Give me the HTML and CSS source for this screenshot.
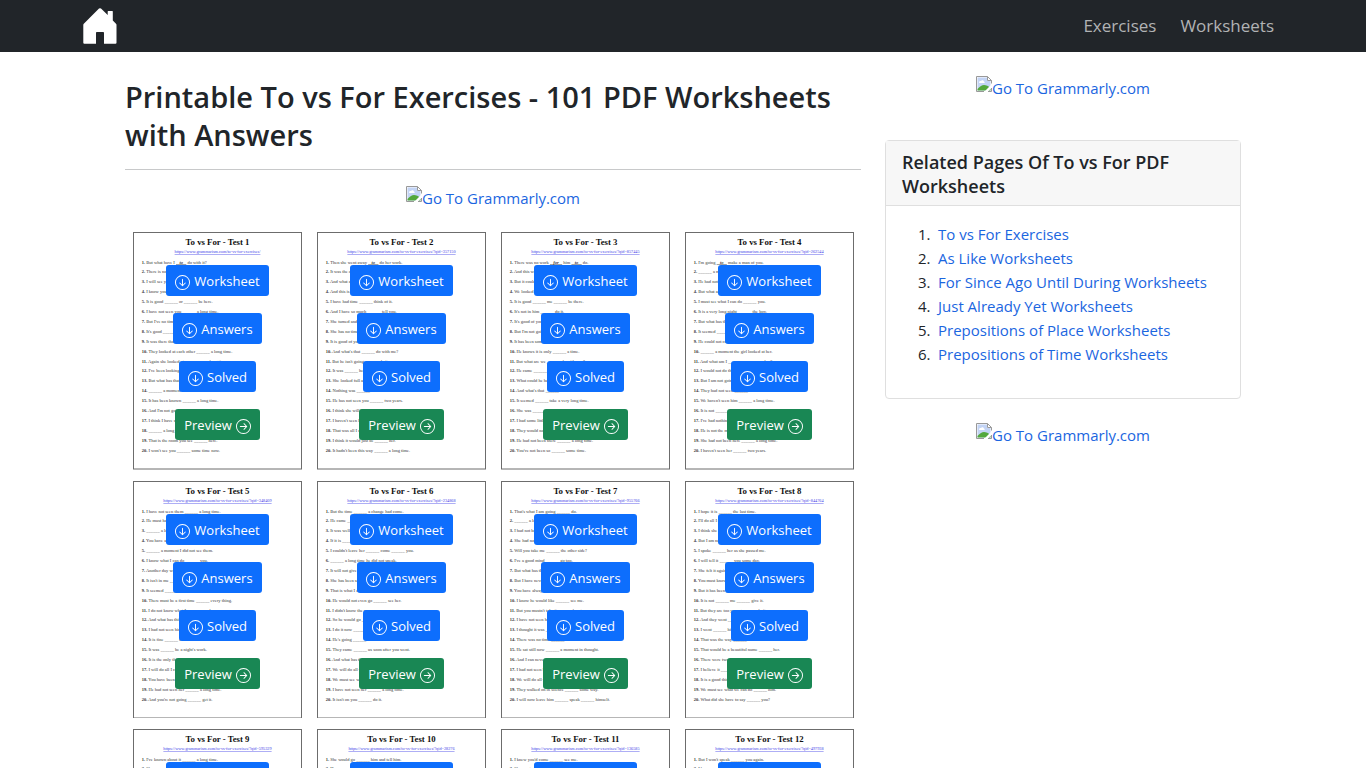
FILE: index.html
```html
<!DOCTYPE html>
<html lang="en">
<head>
<meta charset="utf-8">
<meta name="viewport" content="width=device-width, initial-scale=1">
<title>Printable To vs For Exercises</title>
<link rel="stylesheet" href="styles.css">
</head>
<body>
<svg class="symbols" aria-hidden="true">
  <symbol id="arrow-down" viewBox="0 0 16 16"><path fill-rule="evenodd" d="M1 8a7 7 0 1 0 14 0A7 7 0 0 0 1 8zm15 0A8 8 0 1 1 0 8a8 8 0 0 1 16 0zM8.500 4.500a.5.5 0 0 0-1 0v5.793L5.354 8.146a.5.5 0 1 0-.708.708l3 3a.5.5 0 0 0 .708 0l3-3a.5.5 0 0 0-.708-.708L8.500 10.293V4.500z"/></symbol>
  <symbol id="arrow-right" viewBox="0 0 16 16"><path fill-rule="evenodd" d="M1 8a7 7 0 1 0 14 0A7 7 0 0 0 1 8zm15 0A8 8 0 1 1 0 8a8 8 0 0 1 16 0zM4.500 7.500a.5.5 0 0 0 0 1h5.793l-2.147 2.146a.5.5 0 0 0 .708.708l3-3a.5.5 0 0 0 0-.708l-3-3a.5.5 0 1 0-.708.708L10.293 7.500H4.500z"/></symbol>
  <symbol id="missing-image" viewBox="0 0 16 16">
    <path d="M.5.5h11l4 4v11H.5z" fill="#fff"/>
    <path d="M1.500 1.500h9.500v3.500h3.500v9.500h-13z" fill="#c3d4f5"/>
    <path d="M3 6.500c0-1 1-1.700 2-1.400.6-1.200 2.600-1 2.900.4 1 0 1.200 1.500.2 1.500H3.500z" fill="#fff"/>
    <path d="M1.500 14.500v-1.500C4 10.500 6 9 8 9s4.500 1 6.500 3v2.500z" fill="#53a83c"/>
    <path d="M16 8 8 16h3.500L16 11.500z" fill="#fff"/>
    <path d="M.5 15.500V.5h11l4 4v3M.5 15.500H8M11.500.5v4h4M12 15.500h3.500V12" fill="none" stroke="#999"/>
  </symbol>
</svg>

<header class="navbar">
  <nav class="navbar-inner" aria-label="Main">
    <a class="brand" href="#" aria-label="Home">
      <svg class="brand-icon" viewBox="0 0 34 36" aria-hidden="true"><path d="M16 .6Q17 0 18 .6L24.700 7V3.500Q24.700 3 25.200 3H29.300Q29.800 3 29.800 3.500V12.500L33 15.800Q33.500 16.300 33.500 17V34.700Q33.500 35.700 32.500 35.700H21V24.800Q21 24 20.200 24H13.800Q13 24 13 24.800V35.700H1.300Q.3 35.700.3 34.700V17Q.3 16.300.8 15.800Z" fill="#fff"/></svg>
    </a>
    <div class="nav-links">
      <a href="#">Exercises</a>
      <a href="#">Worksheets</a>
    </div>
  </nav>
</header>

<div class="container">
  <main class="content">
    <h1>Printable To vs For Exercises - 101 PDF Worksheets with Answers</h1>
    <a class="promo" href="#"><svg class="promo-icon" aria-hidden="true"><use href="#missing-image"/></svg><span>Go To Grammarly.com</span></a>
    <div class="sheets" id="sheets"></div>
  </main>
  <aside class="sidebar">
    <a class="promo" href="#"><svg class="promo-icon" aria-hidden="true"><use href="#missing-image"/></svg><span>Go To Grammarly.com</span></a>
    <section class="card">
      <h2 class="card-header">Related Pages Of To vs For PDF Worksheets</h2>
      <ol class="card-list">
        <li><a href="#">To vs For Exercises</a></li>
        <li><a href="#">As Like Worksheets</a></li>
        <li><a href="#">For Since Ago Until During Worksheets</a></li>
        <li><a href="#">Just Already Yet Worksheets</a></li>
        <li><a href="#">Prepositions of Place Worksheets</a></li>
        <li><a href="#">Prepositions of Time Worksheets</a></li>
      </ol>
    </section>
    <a class="promo" href="#"><svg class="promo-icon" aria-hidden="true"><use href="#missing-image"/></svg><span>Go To Grammarly.com</span></a>
  </aside>
</div>
<script src="sheets.js"></script>
</body>
</html>
```
FILE: styles.css
```css
* { box-sizing: border-box; }
html { overflow-x: hidden; scrollbar-width: none; }
body {
  margin: 0;
  background: #fff;
  color: #212529;
  font: 400 15px/24px "Open Sans", "Noto Sans", sans-serif;
}
a { color: #1b66df; text-decoration: none; }
.symbols { display: none; }

.navbar { background: #212529; }
.navbar-inner {
  display: flex;
  align-items: center;
  justify-content: space-between;
  max-width: 1200px;
  min-height: 52px;
  margin: 0 auto;
}
.brand { display: flex; }
.brand-icon { width: 34px; height: 36px; }
.nav-links { display: flex; gap: 24px; padding-right: 9px; font-size: 17px; }
.nav-links a { color: #b1b3b4; }

.container {
  display: grid;
  grid-template-columns: minmax(0, 736fr) minmax(0, 356fr);
  gap: 24px;
  max-width: 1140px;
  margin: 0 auto;
  padding: 24px 12px;
}
h1 {
  margin: 0 0 16px;
  padding: 2px 0 15px;
  border-bottom: 1px solid #c8c9ca;
  font-size: 29px;
  line-height: 38px;
  font-weight: 600;
}
.content, .sidebar { display: flex; flex-direction: column; }
.promo { display: flex; justify-content: center; line-height: 25px; }
.promo-icon { width: 16px; height: 16px; flex: none; }

.sheets {
  display: grid;
  grid-template-columns: repeat(4, minmax(0, 1fr));
  gap: 11px 15px;
  margin-top: 21px;
  padding: 0 7px 0 8px;
}
.sheet { position: relative; }
.page { display: block; width: 100%; font-family: "Liberation Serif", serif; }
.page-frame { fill: #fff; stroke: #6c6c6c; stroke-width: 4; }
.page-title { font-size: 35px; font-weight: 700; text-anchor: middle; fill: #111; }
.page-url { font-size: 17px; text-anchor: middle; text-decoration: underline; fill: #4040e8; }
.page-line { font-size: 18px; fill: #333; }
.page-number { font-weight: 700; }
.page-answer { font-weight: 700; font-style: italic; text-decoration: underline; }
.actions {
  position: absolute;
  inset: 33px 0 auto;
  display: flex;
  flex-direction: column;
  align-items: center;
  gap: 17px;
}
.btn {
  display: flex;
  align-items: center;
  gap: 4px;
  padding: 6px 9px 4px;
  border-radius: 3px;
  background: #0d6efd;
  color: #fff;
  font-size: 13px;
  line-height: 21px;
}
.btn-preview { background: #198754; }
.btn-icon { width: 15px; height: 15px; margin-top: 2px; fill: currentColor; }

.card {
  margin: 39px 0 24px;
  border: 1px solid #dfdfdf;
  border-radius: 4px;
}
.card-header {
  margin: 0;
  padding: 9px 16px 7px;
  border-bottom: 1px solid #dfdfdf;
  background: #f7f7f7;
  font-size: 18px;
  line-height: 24px;
  font-weight: 600;
}
.card-list { margin: 0; padding: 16px 16px 32px 52px; }
.card-list li::marker { content: counter(list-item) ".\2002"; }

@media (max-width: 900px) {
  .container { grid-template-columns: minmax(0, 1fr); }
  .sheets { grid-template-columns: repeat(auto-fill, minmax(160px, 1fr)); }
}
```
FILE: sheets.js
```js
const BLANK = "______";

// Each test: page id and its twenty lines; "_" is a blank, *word* a filled-in answer.
const tests = [
  ["", "But what have I *to* do with it?|There is no need _ go|I will see you _ it|I know you want _ go|It is good _ or _ be here.|I have not seen you _ a long time.|But I've no time _ that|It's good _ you|It was there that _ go|They looked at each other _ a long time.|Again she looked at me _ a long time.|I've been looking _ you|But what has that _ do|_ a moment he sat|It has been known _ a long time.|And I'm not going _ do|I think I have some _ do|_ a long time he sat|That is the room you see _ here.|I won't see you _ some time now."],
  ["357150", "Then she went away *to* do her work.|It was the only _ do|And what am I _ do|And this is not _ me|I have had time _ think of it.|And I have so much _ tell you.|She turned and _ him|She has no time _ it|It is good of you _ it|And what's that _ do with me?|But he isn't going _ do it.|It was _ her|She looked full at him _|Nothing was _ do|He has not seen you _ two years.|I think she will be _|I haven't seen her _|That was all I could _|I think it would just be _ her.|It hadn't been this way _ a long time."],
  ["857445", "There was no work *for* him *to* do.|And this was _ her|But it could not _|We looked at it _|It is good _ me _ be there.|It's not in him _ do it.|It's good of you _ say|But I'm not going _|It has been some time _|He knows it is only _ a time.|But what are we _ do with you?|He came _ see|What could he have _|And what's that _ me|It seemed _ take a very long time.|She was _ go|I had some little time _|They would not be _|He had not been there _ a long time.|You've not been so _ some time."],
  ["262544", "I'm going *to* make a man of you.|_ a moment|He had not been _|But what are we _|I must see what I can do _ you.|It is a very long night _ the boy.|But what has that _|It seemed _ him|He could not care _|_ a moment the girl looked at her.|And what am I _ say _ her?|I would not do that _|But I am not going _|They had not seen _|We haven't seen him _ a long time.|It is not _ me|I've had nothing _|He is not the man _|She had not been here _ a long time.|I haven't seen her _ two years."],
  ["348409", "I have not seen them _ a long time.|He must have _|_ a long time|You have a lot _|_ a moment I did not see them.|I know what I can do _ you.|Another day was _|It isn't in me _|It seemed _ me|There must be a first time _ every thing.|I do not know what I am _ do.|And what has this _|I had not seen him _|It is fine _ us|It was _ be a night's work.|It is the only thing _|I will do all I can _|You have been _ me|He had not seen her _ a long time.|And you're not going _ get it."],
  ["234868", "But the time _ a change had come.|He came _ see|It was well _ us|If it is _ be|I couldn't leave her _ come _ you.|_ a long time he did not speak.|It will not give _|She has been so _|That is what I am _|He would not even go _ see her.|I didn't know the way _ come.|So he would go _|I do it now _ you|He's going _ be|They came _ us soon after you went.|And what has this _|We will do all we can _|We must see what _|I have not seen her _ a long time.|It isn't on you _ do it."],
  ["955766", "That's what I am going _ do.|_ a long time|I had not been _|She had not seen _|Will you take me _ the other side?|I've a good mind _ go too.|But what has that _|But I have never _|You have always _|I know he would like _ see me.|But you mustn't take it _ heart.|I have not seen him _|I thought it was _|There was no time _|He sat still now _ a moment in thought.|And I can never _|I had not seen him _|We will do all we can _|They walked on in silence _ some way.|I will now leave him _ speak _ himself."],
  ["844764", "I hope it is _ the last time.|I'll do all I can _|I think she is _|But I am not _|I spoke _ her as she passed me.|I will tell it _ you some day.|She felt it again _|You must know _|But it has been _|It is not _ me _ give it.|But they are too young _ do it.|And they went _ see|I went _ him|That was the way _|That would be a beautiful name _ her.|There were two _|I believe it _ be|It is a good thing _|We must see what we can do _ him.|What did she have to say _ you?"],
  ["595329", "I've known about it _ a long time.|She came _ me"],
  ["28276", "She would go _ him and tell him.|He was _ see"],
  ["136585", "I knew you'd come _ see me.|She went _ him"],
  ["497938", "But I won't speak _ you again.|I have _ go"]
];

function lineMarkup(text, i) {
  const body = text
    .replace(/_/g, BLANK)
    .replace(/\*(\w+)\*/g, '<tspan class="page-answer">&#160;&#160;&#160;$1&#160;&#160;&#160;</tspan>');
  return `<text class="page-line" x="35" y="${126 + i * 39.6}"><tspan class="page-number">${i + 1}.</tspan> ${body}</text>`;
}

function button(label) {
  return `<a class="btn" href="#"><svg class="btn-icon" aria-hidden="true"><use href="#arrow-down"/></svg><span>${label}</span></a>`;
}

document.getElementById("sheets").innerHTML = tests.map(([id, lines], n) => `
  <article class="sheet">
    <svg class="page" viewBox="0 0 676 950" role="img" aria-label="To vs For - Test ${n + 1}">
      <rect class="page-frame" x="2" y="2" width="672" height="946"/>
      <text class="page-title" x="338" y="52">To vs For - Test ${n + 1}</text>
      <text class="page-url" x="338" y="84">https://www.grammarism.com/to-vs-for-exercises/${id ? "?qid=" + id : ""}</text>
      ${lines.split("|").map(lineMarkup).join("")}
    </svg>
    <div class="actions">
      ${button("Worksheet")}${button("Answers")}${button("Solved")}
      <a class="btn btn-preview" href="#"><span>Preview</span><svg class="btn-icon" aria-hidden="true"><use href="#arrow-right"/></svg></a>
    </div>
  </article>`).join("");
```
